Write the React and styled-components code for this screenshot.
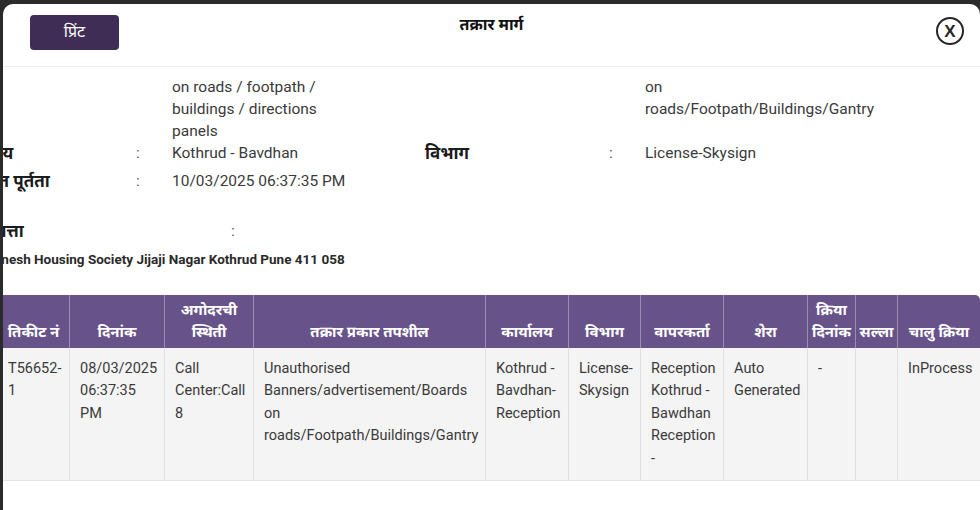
import React from 'react'
import styled, { createGlobalStyle } from 'styled-components'

const GlobalStyle = createGlobalStyle`
    html, body {
        margin: 0;
        height: 100%;
    }
    body {
        background: #2b2b2b;
        overflow: hidden;
        font-family: Roboto, "Noto Sans Devanagari", "Noto Sans", sans-serif;
    }
`

const columns = [
    { title: 'तिकीट नं', width: 72 },
    { title: 'दिनांक', width: 95 },
    { title: 'अगोदरची स्थिती', width: 89 },
    { title: 'तक्रार प्रकार तपशील', width: 232 },
    { title: 'कार्यालय', width: 83 },
    { title: 'विभाग', width: 72 },
    { title: 'वापरकर्ता', width: 83 },
    { title: 'शेरा', width: 84 },
    { title: 'क्रिया दिनांक', width: 48 },
    { title: 'सल्ला', width: 42 },
    { title: 'चालु क्रिया', width: 82 },
]

const row = [
    'T56652-1',
    '08/03/2025 06:37:35 PM',
    'Call Center:Call 8',
    'Unauthorised Banners/advertisement/Boards on roads/Footpath/Buildings/Gantry',
    'Kothrud - Bavdhan-Reception',
    'License-Skysign',
    'Reception Kothrud - Bawdhan Reception -',
    'Auto Generated',
    '-',
    '',
    'InProcess',
]

const App = () => {
    return (
        <>
            <GlobalStyle />
            <Modal>
                <Header>
                    <PrintButton>प्रिंट</PrintButton>
                    <Title>तक्रार मार्ग</Title>
                    <CloseButton aria-label="close">X</CloseButton>
                </Header>
                <Body>
                    <Scrolled>
                        <DetailRow>
                            <span />
                            <span />
                            <Value>on roads / footpath / buildings / directions panels</Value>
                            <span />
                            <span />
                            <Value>on roads/Footpath/Buildings/Gantry</Value>
                        </DetailRow>
                        <DetailRow>
                            <Label>कार्यालय</Label>
                            <Colon>:</Colon>
                            <Value>Kothrud - Bavdhan</Value>
                            <Label>विभाग</Label>
                            <Colon>:</Colon>
                            <Value>License-Skysign</Value>
                        </DetailRow>
                        <DetailRow $mt={6}>
                            <Label>अपेक्षित पूर्तता</Label>
                            <Colon>:</Colon>
                            <Value>10/03/2025 06:37:35 PM</Value>
                        </DetailRow>
                        <AddressRow>
                            <Label>संपूर्ण पत्ता</Label>
                            <Colon>:</Colon>
                        </AddressRow>
                        <Address>102, Ganesh Housing Society Jijaji Nagar Kothrud Pune 411 058</Address>

                        <Table>
                            <thead>
                                <tr>
                                    {columns.map(col => (
                                        <Th key={col.title} $w={col.width}>{col.title}</Th>
                                    ))}
                                </tr>
                            </thead>
                            <tbody>
                                <tr>
                                    {row.map((cell, i) => <Td key={i}>{cell}</Td>)}
                                </tr>
                            </tbody>
                        </Table>
                    </Scrolled>
                </Body>
            </Modal>
        </>
    )
}

export default App

const Modal = styled.div`
    margin: 4px 0 0 3px;
    height: calc(100vh - 4px);
    background: #fff;
    border-radius: 10px 10px 0 0;
    display: flex;
    flex-direction: column;
    overflow: hidden;
`

const Header = styled.div`
    flex: none;
    height: 63px;
    box-sizing: border-box;
    padding: 11px 16px 0;
    display: grid;
    grid-template-columns: 1fr auto 1fr;
    align-items: start;
    border-bottom: 1px solid #f0f0f0;
`

const PrintButton = styled.button`
    justify-self: start;
    margin-left: 11px;
    width: 89px;
    height: 35px;
    border: none;
    border-radius: 4px;
    background: #3f2d55;
    color: #fff;
    font-family: Roboto, "Noto Sans Devanagari", sans-serif;
    font-size: 16px;
    cursor: pointer;
`

const Title = styled.h3`
    margin: -1px 0 0;
    font-size: 16px;
    font-weight: 700;
    line-height: 22px;
    color: #111;
`

const CloseButton = styled.button`
    justify-self: end;
    margin-top: 2px;
    width: 28px;
    height: 28px;
    padding: 0;
    box-sizing: border-box;
    border: 2.5px solid #262626;
    border-radius: 50%;
    background: #fff;
    color: #262626;
    font-family: "Liberation Sans", Arial, sans-serif;
    font-size: 17px;
    font-weight: 700;
    line-height: 23px;
    text-align: center;
`

const Body = styled.div`
    flex: 1;
    overflow: hidden;
`

const Scrolled = styled.div`
    margin-left: -48px;
    padding-top: 9px;
    width: 1100px;
`

const DetailRow = styled.div`
    display: grid;
    grid-template-columns: 181px 36px 253px 184px 36px 240px;
    align-items: start;
    margin-top: ${({ $mt }) => $mt || 0}px;
    line-height: 22px;
`

const Label = styled.span`
    font-size: 17px;
    font-weight: 700;
    color: #1b1b1b;
    white-space: nowrap;
`

const Colon = styled.span`
    font-size: 15.5px;
    color: #555;
`

const Value = styled.span`
    font-size: 15.5px;
    color: #3a3a3a;
    padding-right: 88px;
    &:last-child {
        padding-right: 0;
    }
`

const AddressRow = styled.div`
    display: grid;
    grid-template-columns: 276px 36px;
    margin-top: 28px;
    line-height: 22px;
`

const Address = styled.div`
    margin-top: 8px;
    font-size: 13.5px;
    font-weight: 700;
    line-height: 18px;
    color: #2a2a2a;
`

const Table = styled.table`
    margin: 27px 0 0 43px;
    width: 982px;
    table-layout: fixed;
    border-collapse: separate;
    border-spacing: 0;
    border-radius: 5px 5px 0 0;
    overflow: hidden;
`

const Th = styled.th`
    width: ${({ $w }) => $w}px;
    box-sizing: border-box;
    padding: 4px 2px 5px;
    vertical-align: bottom;
    background: #67528a;
    color: #fff;
    font-size: 15px;
    font-weight: 700;
    line-height: 22px;
    text-align: center;
    border-right: 1px solid rgba(255, 255, 255, 0.35);
    &:last-child {
        border-right: none;
    }
`

const Td = styled.td`
    height: 129px;
    box-sizing: border-box;
    padding: 10px 4px 10px 10px;
    vertical-align: top;
    background: #f4f4f4;
    color: #3a3a3a;
    font-size: 14.5px;
    line-height: 22.4px;
    border-right: 1px solid #e0e0e0;
    border-bottom: 1px solid #e4e4e4;
    word-wrap: break-word;
    &:last-child {
        border-right: none;
    }
`
